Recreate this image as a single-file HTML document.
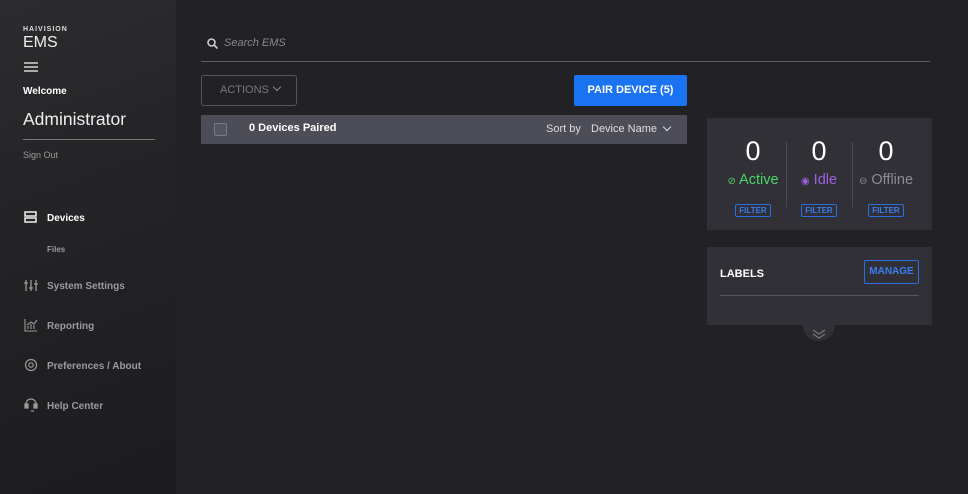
<!DOCTYPE html>
<html><head><style>
*{box-sizing:border-box;margin:0;padding:0}
body{width:968px;height:494px;overflow:hidden;background:#222226;font-family:"Liberation Sans",sans-serif;position:relative;color:#fff}
.side{position:absolute;left:0;top:0;width:176px;height:494px;background:linear-gradient(160deg,#2c2c2f 0%,#242427 40%,#1c1c1e 100%)}
.abs{position:absolute}
.nav{position:absolute;left:47px;font-size:10px;font-weight:bold;color:#9a9aa0}
.ic{position:absolute;left:24px}
.panel{position:absolute;background:#303036}
.filter{position:absolute;top:204px;width:36px;height:13px;border:1px solid #2a6ee0;border-radius:2px;color:#3a7df0;font-size:8px;font-weight:bold;text-align:center;line-height:11px}
.num{position:absolute;top:136px;font-size:27px;width:60px;text-align:center}
.st{position:absolute;top:172px;font-size:14.5px;width:80px;text-align:center}
</style></head><body>
<div class="side">
<div class="abs" style="left:23px;top:26px;font-size:7px;font-weight:bold;letter-spacing:1px;color:#ddd">HAIVISION</div>
<div class="abs" style="left:23px;top:34px;font-size:16px;color:#eee">EMS</div>
<div class="abs" style="left:24px;top:62px;width:14px;height:2px;background:#aaa;box-shadow:0 4px 0 #aaa,0 8px 0 #aaa"></div>
<div class="abs" style="left:23px;top:86px;font-size:10px;font-weight:bold">Welcome</div>
<div class="abs" style="left:23px;top:109px;font-size:17.5px;color:#eee">Administrator</div>
<div class="abs" style="left:23px;top:139px;width:132px;height:1px;background:#777"></div>
<div class="abs" style="left:23px;top:150px;font-size:9px;color:#999">Sign Out</div>
<svg class="ic" style="top:211px" width="14" height="12"><rect x="1" y="1" width="11" height="4" fill="none" stroke="#eee" stroke-width="1.5"/><rect x="1" y="7" width="11" height="4" fill="none" stroke="#eee" stroke-width="1.5"/></svg>
<div class="nav" style="top:213px;color:#fff">Devices</div>
<div class="nav" style="top:245px;font-size:8px">Files</div>
<svg class="ic" style="top:279px" width="14" height="13" stroke="#999" stroke-width="1.3"><path d="M2 1v11M7 1v11M12 1v11M0 4h4M5 9h4M10 5h4"/></svg>
<div class="nav" style="top:281px">System Settings</div>
<svg class="ic" style="top:318px" width="14" height="14" stroke="#999" fill="none" stroke-width="1.1"><path d="M1 1v12h12M4 11V8M7 11V6M10 11V7M3 7l4-3 3 2 3-4"/></svg>
<div class="nav" style="top:321px">Reporting</div>
<svg class="ic" style="top:358px" width="14" height="14" stroke="#999" fill="none" stroke-width="1.2"><circle cx="7" cy="7" r="5.5"/><circle cx="7" cy="7" r="2.2"/></svg>
<div class="nav" style="top:361px">Preferences / About</div>
<svg class="ic" style="top:398px" width="14" height="14" stroke="#999" fill="none" stroke-width="1.3"><path d="M2 8V6a5 5 0 0110 0v2M7 13h3"/><rect x="1" y="6" width="3" height="4" fill="#999"/><rect x="10" y="6" width="3" height="4" fill="#999"/></svg>
<div class="nav" style="top:401px">Help Center</div>
</div>

<svg class="abs" style="left:207px;top:38px" width="11" height="11" stroke="#ccc" stroke-width="1.6" fill="none"><circle cx="4.5" cy="4.5" r="3.5"/><path d="M7 7l3.5 3.5"/></svg>
<div class="abs" style="left:224px;top:37px;font-size:11px;font-style:italic;color:#888">Search EMS</div>
<div class="abs" style="left:201px;top:61px;width:729px;height:1px;background:#5a5a62"></div>

<div class="abs" style="left:201px;top:75px;width:96px;height:31px;border:1px solid #55555c;border-radius:3px;color:#77777d;font-size:11px;line-height:29px;padding-left:18px">ACTIONS <span style="display:inline-block;width:6px;height:6px;border-right:1.5px solid #888;border-bottom:1.5px solid #888;transform:rotate(45deg);position:relative;top:-3px;left:2px"></span></div>
<div class="abs" style="left:574px;top:75px;width:113px;height:31px;background:#1a73f0;border-radius:2px;font-size:11px;font-weight:bold;line-height:31px;text-align:center">PAIR DEVICE (5)</div>

<div class="abs" style="left:201px;top:115px;width:486px;height:29px;background:#4d4d58"></div>
<div class="abs" style="left:214px;top:123px;width:13px;height:13px;border:1px solid #7a7a84;border-radius:2px;background:#55555f"></div>
<div class="abs" style="left:249px;top:122px;font-size:11px;font-weight:bold">0 Devices Paired</div>
<div class="abs" style="left:546px;top:123px;font-size:11px;color:#ddd">Sort by</div>
<div class="abs" style="left:591px;top:123px;font-size:11px;color:#ddd">Device Name</div>
<div class="abs" style="left:664px;top:124px;width:6px;height:6px;border-right:1.5px solid #ddd;border-bottom:1.5px solid #ddd;transform:rotate(45deg)"></div>

<div class="panel" style="left:707px;top:118px;width:225px;height:112px"></div>
<div class="abs" style="left:786px;top:142px;width:1px;height:65px;background:#4a4a52"></div>
<div class="abs" style="left:852px;top:142px;width:1px;height:65px;background:#4a4a52"></div>
<div class="num" style="left:723px">0</div>
<div class="num" style="left:789px">0</div>
<div class="num" style="left:856px">0</div>
<div class="st" style="left:713px;color:#4cd46a"><span style="font-size:10px">⊘</span> Active</div>
<div class="st" style="left:779px;color:#9b62e0"><span style="font-size:10px">◉</span> Idle</div>
<div class="st" style="left:846px;color:#8a8a90"><span style="font-size:10px">⊖</span> Offline</div>
<div class="filter" style="left:735px">FILTER</div>
<div class="filter" style="left:801px">FILTER</div>
<div class="filter" style="left:868px">FILTER</div>

<div class="panel" style="left:707px;top:247px;width:225px;height:78px"></div>
<div class="abs" style="left:720px;top:268px;font-size:11px;font-weight:bold">LABELS</div>
<div class="abs" style="left:864px;top:260px;width:55px;height:24px;border:1px solid #2a6ee0;border-radius:2px;color:#3a7df0;font-size:10px;font-weight:bold;text-align:center;line-height:22px">MANAGE</div>
<div class="abs" style="left:720px;top:295px;width:199px;height:1px;background:#55555c"></div>
<div class="abs" style="left:803px;top:309px;width:32px;height:32px;border-radius:50%;background:#303036;clip-path:inset(16px 0 0 0)"></div>
<svg class="abs" style="left:811px;top:328px" width="16" height="12" stroke="#777" fill="none" stroke-width="1.2"><path d="M2 2l6 4 6-4M2 6l6 4 6-4"/></svg>
</body></html>
